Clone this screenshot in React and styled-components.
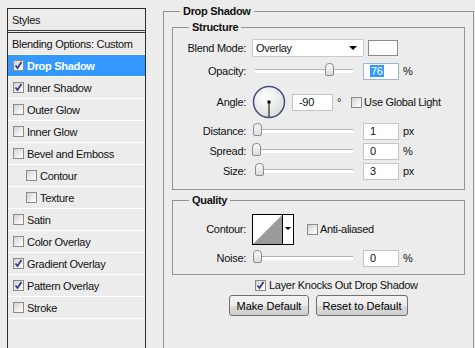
import React from "react";
import styled, { createGlobalStyle } from "styled-components";

const GlobalStyle = createGlobalStyle`
  html, body {
    margin: 0;
    padding: 0;
    background: #ececec;
    overflow: hidden;
  }
  body {
    font-family: "Liberation Sans", Arial, sans-serif;
    font-size: 11px;
    letter-spacing: -0.3px;
    color: #111;
  }
`;

const Page = styled.div`
  display: flex;
  align-items: flex-start;
  padding: 8px 0 0 7px;
  height: 348px;
  box-sizing: border-box;
`;

// left list of effects
const Sidebar = styled.div`
  width: 139px;
  height: 400px;
  box-sizing: border-box;
  border: 1px solid #2b2b2b;
  background: #ececec;
  flex-shrink: 0;
`;

const SideHeader = styled.div`
  height: 21px;
  padding-left: 4px;
  display: flex;
  align-items: center;
  border-bottom: 3px double #3a3a3a;
`;

const SideItem = styled.div`
  height: 21px;
  border-bottom: 1px solid #ffffff;
  display: flex;
  align-items: center;
  gap: 3px;
  padding-left: ${(p) => (p.$plain ? 4 : p.$indent ? 18 : 5)}px;
  background: ${(p) => (p.$selected ? "#3399ff" : "transparent")};
  color: ${(p) => (p.$selected ? "#fff" : "#111")};
  font-weight: ${(p) => (p.$selected ? "bold" : "normal")};
`;

const Box = styled.span`
  width: 11px;
  height: 11px;
  flex-shrink: 0;
  box-sizing: border-box;
  border: 1px solid #8b8b8b;
  background: linear-gradient(135deg, #d2d2d2 0%, #f4f4f4 70%, #ffffff 100%);
  display: inline-flex;
  align-items: center;
  justify-content: center;
`;

function Check({ checked }) {
  return (
    <Box>
      {checked && (
        <svg width="9" height="9" viewBox="0 0 9 9">
          <path d="M1.5 4.5 L3.5 7 L7.5 1" fill="none" stroke="#2d3d86" strokeWidth="1.7" />
        </svg>
      )}
    </Box>
  );
}

const Main = styled.div`
  margin: -3px 0 0 17px;
  width: 311px;
  flex-shrink: 0;
`;

const Group = styled.fieldset`
  margin: ${(p) => p.$mt || 0}px 0 0 0;
  border: 1px solid #939393;
  padding: ${(p) => p.$pad};
  min-width: 0;
  ${(p) => p.$tall && "height: 400px; box-sizing: border-box;"}
`;

const Legend = styled.legend`
  font-weight: bold;
  padding: 0 3px;
  margin-left: ${(p) => p.$ml}px;
  line-height: 13px;
`;

const Rows = styled.div`
  display: flex;
  flex-direction: column;
  gap: ${(p) => p.$gap}px;
`;

const Row = styled.div`
  display: flex;
  align-items: center;
  height: ${(p) => p.$h}px;
`;

const Label = styled.span`
  width: 73px;
  text-align: right;
  flex-shrink: 0;
  margin-right: 6px;
`;

const Select = styled.div`
  width: 112px;
  height: 18px;
  box-sizing: border-box;
  background: #fff;
  border: 1px solid #c9c9c9;
  border-radius: 2px;
  display: flex;
  align-items: center;
  justify-content: space-between;
  padding: 0 6px 0 3px;
`;

const Arrow = styled.span`
  width: 0;
  height: 0;
  border-left: 4px solid transparent;
  border-right: 4px solid transparent;
  border-top: 4px solid #000;
`;

const Swatch = styled.div`
  width: 30px;
  height: 16px;
  box-sizing: border-box;
  border: 1px solid #8a8a8a;
  background: #fff;
  margin-left: 4px;
`;

const Track = styled.div`
  position: relative;
  width: 98px;
  height: 3px;
  margin: 0 10px 0 3px;
  background: #fff;
  border-top: 1px solid #b4b4b4;
  flex-shrink: 0;
`;

const Thumb = styled.span`
  position: absolute;
  top: -7px;
  width: 9px;
  height: 13px;
  box-sizing: border-box;
  border: 1px solid #8c8c8c;
  border-radius: 4px 4px 2px 2px;
  background: linear-gradient(#fafafa, #dcdcdc);
`;

const Input = styled.div`
  width: ${(p) => p.$w || 36}px;
  height: 17px;
  box-sizing: border-box;
  background: #fff;
  border: 1px solid ${(p) => (p.$focus ? "#9cb6d6" : "#c4c4c4")};
  display: flex;
  align-items: center;
  padding-left: ${(p) => p.$pl || 6}px;
  flex-shrink: 0;
`;

const Sel = styled.span`
  background: #3399ff;
  color: #fff;
  padding: 0 1px;
`;

const Unit = styled.span`
  margin-left: 4px;
`;

const Dial = styled.svg`
  flex-shrink: 0;
  margin-right: 6px;
`;

const Inline = styled.label`
  display: flex;
  align-items: center;
  gap: 2px;
  margin-left: ${(p) => p.$ml}px;
`;

const Footer = styled.div`
  display: flex;
  flex-direction: column;
  gap: 3px;
  margin-top: 3px;
`;

const Knock = styled.div`
  display: flex;
  align-items: center;
  gap: 3px;
  padding-left: 83px;
  height: 14px;
`;

const Buttons = styled.div`
  display: flex;
  justify-content: center;
  gap: 7px;
`;

const Button = styled.button`
  width: ${(p) => p.$w}px;
  height: 21px;
  font: inherit;
  color: #000;
  border: 1px solid #707070;
  border-radius: 3px;
  background: linear-gradient(#f3f3f3 0%, #ebebeb 50%, #dcdcdc 51%, #cfcfcf 100%);
  padding: 0;
`;

function Slider({ pos }) {
  return (
    <Track>
      <Thumb style={{ left: pos }} />
    </Track>
  );
}

const effects = [
  { name: "Drop Shadow", checked: true, selected: true },
  { name: "Inner Shadow", checked: true },
  { name: "Outer Glow" },
  { name: "Inner Glow" },
  { name: "Bevel and Emboss" },
  { name: "Contour", indent: true },
  { name: "Texture", indent: true },
  { name: "Satin" },
  { name: "Color Overlay" },
  { name: "Gradient Overlay", checked: true },
  { name: "Pattern Overlay", checked: true },
  { name: "Stroke" },
];

export default function App() {
  return (
    <>
      <GlobalStyle />
      <Page>
        <Sidebar>
          <SideHeader>Styles</SideHeader>
          <SideItem $plain>Blending Options: Custom</SideItem>
          {effects.map((e) => (
            <SideItem key={e.name} $selected={e.selected} $indent={e.indent}>
              <Check checked={e.checked} />
              {e.name}
            </SideItem>
          ))}
        </Sidebar>

        <Main>
          <Group $tall $pad="3px 8px 0">
            <Legend $ml={8}>Drop Shadow</Legend>
            <Group $pad="4px 0 9px 0">
              <Legend $ml={16}>Structure</Legend>
              <Rows $gap={2}>
                <Row $h={20}>
                  <Label>Blend Mode:</Label>
                  <Select>
                    Overlay
                    <Arrow />
                  </Select>
                  <Swatch />
                </Row>
                <Row $h={22}>
                  <Label>Opacity:</Label>
                  <Slider pos={70} />
                  <Input $focus>
                    <Sel>76</Sel>
                  </Input>
                  <Unit>%</Unit>
                </Row>
                <Row $h={36}>
                  <Label>Angle:</Label>
                  <Dial width="34" height="34" viewBox="0 0 34 34">
                    <defs>
                      <radialGradient id="dialFill" cx="40%" cy="35%" r="70%">
                        <stop offset="0%" stopColor="#ffffff" />
                        <stop offset="100%" stopColor="#dcdcdc" />
                      </radialGradient>
                    </defs>
                    <circle cx="17" cy="17" r="15.5" fill="url(#dialFill)" stroke="#3f4f7c" strokeWidth="1.5" />
                    <line x1="17" y1="17" x2="17" y2="32" stroke="#000" strokeWidth="1" />
                    <rect x="15.5" y="15.5" width="3" height="3" fill="#000" />
                  </Dial>
                  <Input $w={41}>-90</Input>
                  <Unit>°</Unit>
                  <Inline $ml={10}>
                    <Check />
                    Use Global Light
                  </Inline>
                </Row>
                <Row $h={18}>
                  <Label>Distance:</Label>
                  <Slider pos={-2} />
                  <Input>1</Input>
                  <Unit>px</Unit>
                </Row>
                <Row $h={18}>
                  <Label>Spread:</Label>
                  <Slider pos={-3} />
                  <Input>0</Input>
                  <Unit>%</Unit>
                </Row>
                <Row $h={18}>
                  <Label>Size:</Label>
                  <Slider pos={0} />
                  <Input>3</Input>
                  <Unit>px</Unit>
                </Row>
              </Rows>
            </Group>

            <Group $mt={4} $pad="6px 0 7px 0">
              <Legend $ml={16}>Quality</Legend>
              <Rows $gap={4}>
                <Row $h={32}>
                  <Label>Contour:</Label>
                  <svg width="42" height="31" viewBox="0 0 42 31">
                    <rect x="0.5" y="0.5" width="41" height="30" fill="#fff" stroke="#000" />
                    <polygon points="1,30 30,1 30,30" fill="#9a9a9a" />
                    <line x1="30.5" y1="0" x2="30.5" y2="31" stroke="#000" />
                    <polygon points="33,13 39,13 36,16" fill="#000" />
                  </svg>
                  <Inline $ml={13}>
                    <Check />
                    Anti-aliased
                  </Inline>
                </Row>
                <Row $h={18}>
                  <Label>Noise:</Label>
                  <Slider pos={-2} />
                  <Input>0</Input>
                  <Unit>%</Unit>
                </Row>
              </Rows>
            </Group>

            <Footer>
              <Knock>
                <Check checked />
                Layer Knocks Out Drop Shadow
              </Knock>
              <Buttons>
                <Button $w={80}>Make Default</Button>
                <Button $w={92}>Reset to Default</Button>
              </Buttons>
            </Footer>
          </Group>
        </Main>
      </Page>
    </>
  );
}
